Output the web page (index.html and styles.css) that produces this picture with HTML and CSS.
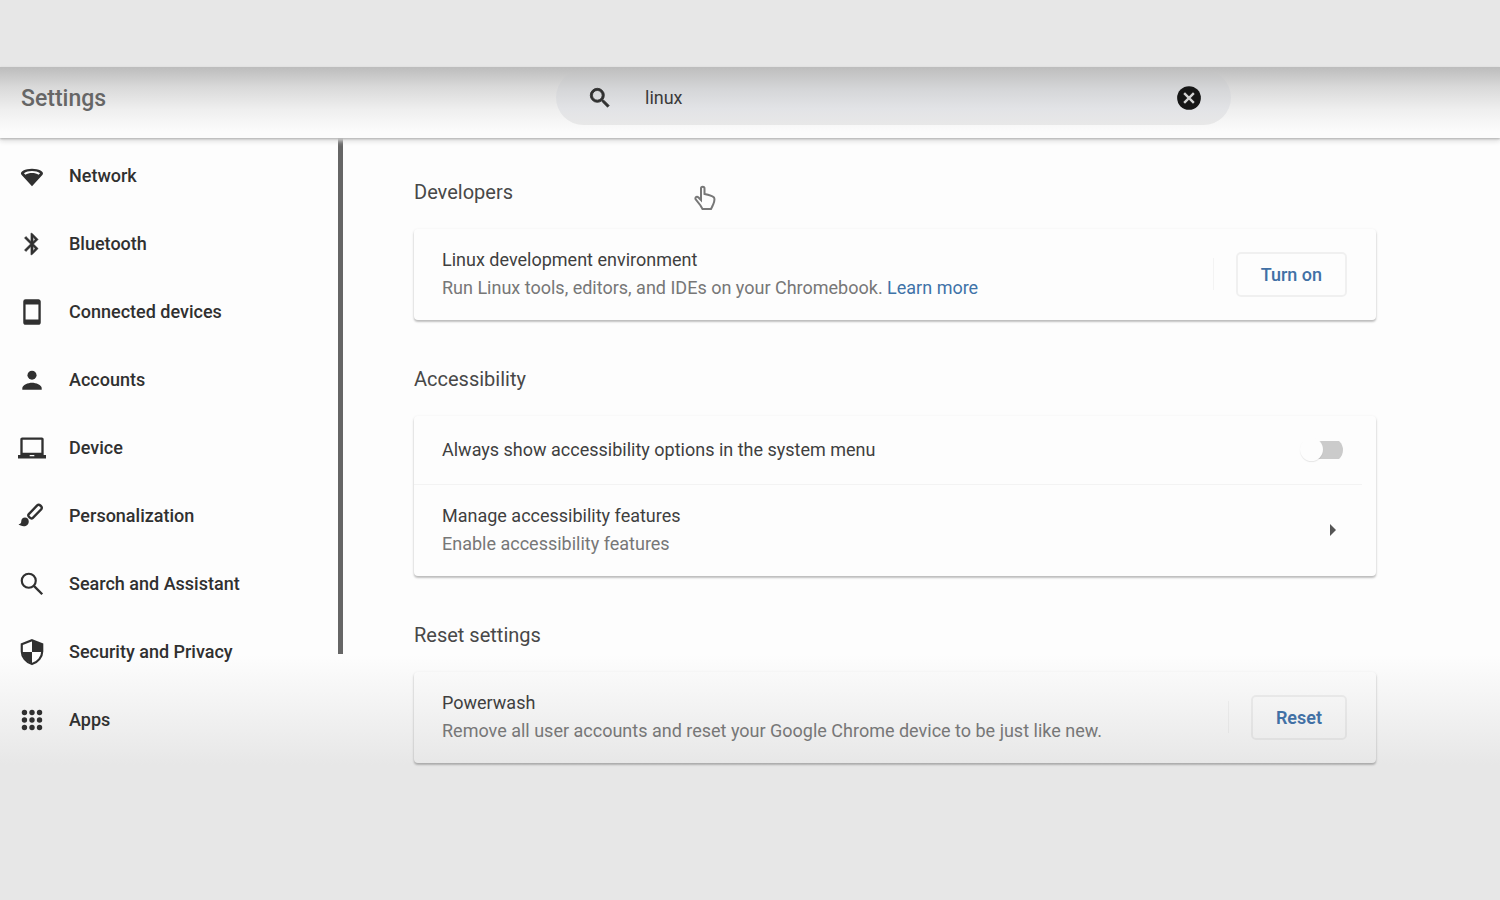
FILE: index.html
```html
<!DOCTYPE html>
<html lang="en">
<head>
<meta charset="utf-8">
<title>Settings</title>
<link rel="stylesheet" href="styles.css">
</head>
<body>
<div class="window">
  <header class="topbar">
    <h1 class="topbar-title">Settings</h1>
    <form class="search" role="search">
      <label class="search-label" for="query" aria-label="Search settings">
        <svg class="icon" viewBox="-1 -1 26 26"><path d="M15.500 14h-.79l-.28-.27A6.470 6.470 0 0 0 16 9.500 6.500 6.500 0 1 0 9.500 16c1.610 0 3.090-.590 4.230-1.570l.27.28v.79l5 4.990L20.490 19l-4.990-5zm-6 0C7.010 14 5 11.990 5 9.500S7.010 5 9.500 5 14 7.010 14 9.500 11.990 14 9.500 14z" stroke="currentColor" stroke-width=".8"/></svg>
      </label>
      <input class="search-input" id="query" type="text" value="linux">
      <button class="search-clear" type="reset" aria-label="Clear search">
        <svg class="icon" viewBox="-1 -1 26 26"><circle cx="12" cy="12" r="11"/><path d="m7.500 7.500 9 9m0-9-9 9" stroke="#d4d4d4" stroke-width="2.200"/></svg>
      </button>
    </form>
  </header>

  <div class="body">
    <nav class="sidebar">
      <a class="nav-item" href="#network">
        <svg class="icon" viewBox="-1 -1 26 26"><path fill-rule="evenodd" d="M12 21.500 2.200 10.800C0 8 6 5.300 12 5.300s12 2.700 9.800 5.500zM4.500 9.400l1.400 1.500C7.400 9.900 9.600 9.300 12 9.300s4.600.6 6.100 1.600l1.400-1.500C17.600 8.200 15 7.400 12 7.400s-5.600.8-7.500 2z"/></svg>Network</a>
      <a class="nav-item" href="#bluetooth">
        <svg class="icon" viewBox="-1 -1 26 26"><path d="M17.710 7.710 12 2h-1v7.590L6.410 5 5 6.410 10.590 12 5 17.590 6.410 19 11 14.410V22h1l5.710-5.710-4.300-4.290 4.300-4.290zM13 5.830l1.880 1.880L13 9.590V5.830zm1.880 10.460L13 18.170v-3.760l1.880 1.880z" stroke="currentColor" stroke-width=".5"/></svg>Bluetooth</a>
      <a class="nav-item" href="#devices">
        <svg class="icon" viewBox="0 0 24 24"><path d="M17.500 1h-11a2 2 0 0 0-2 2v18c0 1.100.9 2 2 2h11c1.100 0 2-.9 2-2V3c0-1.100-.9-2-2-2zm0 17.500h-11v-13h11v13z"/></svg>Connected devices</a>
      <a class="nav-item" href="#accounts">
        <svg class="icon" viewBox="-1 -1 26 26"><circle cx="12" cy="7.500" r="4.200"/><path d="M3 21v-1.500C3 16.500 8.500 14.500 12 14.500s9 2 9 5V21z"/></svg>Accounts</a>
      <a class="nav-item" href="#device">
        <svg class="icon" viewBox="0 0 24 24"><path fill-rule="evenodd" d="M22 18V4.500c0-.8-.7-1.500-1.500-1.500h-17C2.700 3 2 3.700 2 4.500V18H0v3h24v-3h-2zM4 5h16v11H4V5zm6 13h4v1h-4v-1z"/></svg>Device</a>
      <a class="nav-item" href="#personalization">
        <svg class="icon" viewBox="-1 -1 26 26"><path d="m8.800 10.500 8-8.300c1.800-1.700 5.500 1.300 3.800 3.500l-8 8.300c-1.500 1.300-5-1.800-3.800-3.500z" fill="none" stroke="currentColor" stroke-width="2.200"/><path d="M5.500 13.500c2 0 3.500 1.500 3.500 3.500 0 2.500-2 4.500-4.700 4.500-1.800 0-4-.8-4.800-2 1.500 0 2.500-.8 2.500-2.500 0-2 1.500-3.500 3.500-3.500z"/></svg>Personalization</a>
      <a class="nav-item" href="#search">
        <svg class="icon" viewBox="-1 -1 26 26"><circle cx="9" cy="9" r="6.500" fill="none" stroke="currentColor" stroke-width="2"/><path d="m13.500 13.500 8 8" stroke="currentColor" stroke-width="2.200"/></svg>Search and Assistant</a>
      <a class="nav-item" href="#security">
        <svg class="icon" viewBox="-1 -1 26 26"><path d="m12 1 9.500 3.700v6.800c0 5-3.900 10.100-9.500 11.700-5.600-1.600-9.500-6.700-9.500-11.700V4.700z" fill="none" stroke="currentColor" stroke-width="2"/><path d="M12 1 21.500 5v7H12zM3 12h9v10.500C7 21 3.500 17 3 12z"/></svg>Security and Privacy</a>
      <a class="nav-item" href="#apps">
        <svg class="icon" viewBox="-1 -1 26 26"><circle cx="5" cy="5" r="2.500"/><circle cx="12" cy="5" r="2.500"/><circle cx="19" cy="5" r="2.500"/><circle cx="5" cy="12" r="2.500"/><circle cx="12" cy="12" r="2.500"/><circle cx="19" cy="12" r="2.500"/><circle cx="5" cy="19" r="2.500"/><circle cx="12" cy="19" r="2.500"/><circle cx="19" cy="19" r="2.500"/></svg>Apps</a>
    </nav>
    <div class="scroll-thumb"></div>

    <main class="content">
      <section class="section">
        <h2 class="section-title">Developers</h2>
        <div class="card">
          <div class="row">
            <div class="row-text">
              <div class="row-title">Linux development environment</div>
              <div class="row-sub">Run Linux tools, editors, and IDEs on your Chromebook. <a class="link" href="#learn">Learn more</a></div>
            </div>
            <div class="action"><button class="button" type="button">Turn on</button></div>
          </div>
        </div>
      </section>

      <section class="section">
        <h2 class="section-title">Accessibility</h2>
        <div class="card">
          <div class="row row-single">
            <label class="row-title row-text" for="a11y-menu">Always show accessibility options in the system menu</label>
            <input class="toggle" id="a11y-menu" type="checkbox">
          </div>
          <div class="divider"></div>
          <div class="row">
            <div class="row-text">
              <div class="row-title">Manage accessibility features</div>
              <div class="row-sub">Enable accessibility features</div>
            </div>
            <button class="arrow" type="button" aria-label="Manage accessibility features">
              <svg class="arrow-icon" viewBox="0 0 6 12"><path d="M0 0l6 6-6 6z"/></svg>
            </button>
          </div>
        </div>
      </section>

      <section class="section">
        <h2 class="section-title">Reset settings</h2>
        <div class="card">
          <div class="row">
            <div class="row-text">
              <div class="row-title">Powerwash</div>
              <div class="row-sub">Remove all user accounts and reset your Google Chrome device to be just like new.</div>
            </div>
            <div class="action"><button class="button button-strong" type="button">Reset</button></div>
          </div>
        </div>
      </section>

      <svg class="pointer" viewBox="0 0 22 26"><path d="M7 15V3.500C7 1 10.500 1 10.500 3.500V9c4 .8 7.500 1.500 9.500 3.500 1.500 3-.5 6-1.500 8.500L17 24H8.500L6.500 20.500 1.500 14c-.5-2 1.500-3 3-1.500z"/></svg>
    </main>
  </div>
</div>
</body>
</html>
```
FILE: styles.css
```css
* {
  box-sizing: border-box;
}

body {
  margin: 0;
  padding: 67px 0;
  background: #e7e7e7;
  color: #3a3a3a;
  font-family: Roboto, "Liberation Sans", sans-serif;
  font-size: 18px;
}

.window {
  background: linear-gradient(#fdfdfd calc(100% - 110px), #e7e7e7);
}

.icon {
  width: 28px;
  height: 28px;
  flex: none;
  fill: currentColor;
}

.topbar {
  position: relative;
  display: grid;
  grid-template-columns: 535px minmax(0, 1fr);
  align-items: center;
  height: 71px;
  padding: 0 269px 10px 21px;
  background: linear-gradient(#bcbcbc, #d9d9d9 28%, #efefef 60%, #fcfcfc 92%);
  box-shadow: 0 1px 2px #b0b0b0, 0 3px 5px #dcdcdc;
}

.topbar-title {
  margin: 0;
  padding-top: 2px;
  color: #666;
  font-size: 23px;
  font-weight: 500;
}

.search {
  display: flex;
  align-items: center;
  height: 55px;
  padding: 0 28px 0 30px;
  border-radius: 28px;
  background: linear-gradient(#c1c1c1, #d5d6d8 35%, #e2e3e6 70%, #e8e8e8);
}

.search-label,
.search-clear {
  display: flex;
}

.search-clear {
  padding: 0;
  border: 0;
  background: none;
  color: #161616;
}

.search-label {
  color: #303030;
}

.search-input {
  flex: 1;
  min-width: 0;
  padding: 0 0 0 31px;
  border: 0;
  outline: 0;
  background: none;
  color: #3a3a3a;
  font: inherit;
}

.body {
  display: flex;
}

.sidebar {
  flex: none;
  width: 338px;
  padding: 4px 0 11px;
}

.nav-item {
  display: flex;
  align-items: center;
  gap: 23px;
  height: 68px;
  padding: 0 0 1px 18px;
  color: #303030;
  font-weight: 500;
  text-decoration: none;
}

.scroll-thumb {
  flex: none;
  width: 5px;
  height: 516px;
  background: #666;
}

.content {
  position: relative;
  flex: 1;
  min-width: 0;
  padding: 42px 124px 0 71px;
}

.section {
  margin-bottom: 47px;
}

.section:last-of-type {
  margin-bottom: 0;
}

.section-title {
  margin: 0 0 25px;
  color: #484848;
  font-size: 20px;
  font-weight: 400;
  line-height: 24px;
}

.card {
  border-radius: 4px;
  box-shadow: 0 2px 2px #00000030, 0 1px 3px #00000020;
}

.row {
  display: flex;
  align-items: center;
  min-height: 91px;
  padding: 0 29px 1px 28px;
}

.row-single {
  min-height: 68px;
}

.row-text {
  flex: 1;
}

.row-title {
  color: #3f3f3f;
  line-height: 28px;
}

.row-sub {
  color: #777;
  line-height: 28px;
}

.link {
  color: #3f73a8;
  text-decoration: none;
}

.divider {
  height: 1px;
  margin-right: 14px;
  background: #f3f3f3;
}

.action {
  display: flex;
  align-items: center;
}

.action::before {
  content: "";
  width: 1px;
  height: 32px;
  margin-right: 22px;
  background: #0000000a;
}

.button {
  height: 45px;
  padding: 0 23px;
  border: 2px solid #0000000d;
  border-radius: 5px;
  background: none;
  color: #4170a5;
  font: inherit;
  font-weight: 500;
}

.button-strong {
  font-weight: 600;
}

.toggle {
  appearance: none;
  display: flex;
  align-items: center;
  width: 43px;
  height: 24px;
  margin: 0 4px 0 0;
  background: linear-gradient(#cbcbcb, #cbcbcb) right center / 26px 18px no-repeat;
  border-radius: 12px;
}

.toggle::before {
  content: "";
  width: 23px;
  height: 23px;
  border-radius: 50%;
  background: #fdfdfd;
  box-shadow: 0 1px 1px #00000018;
}

.arrow {
  display: flex;
  margin-right: 11px;
  padding: 0;
  border: 0;
  background: none;
}

.arrow-icon {
  width: 6px;
  height: 12px;
  fill: #555;
}

.pointer {
  position: absolute;
  top: 47px;
  left: 351px;
  width: 22px;
  height: 26px;
  fill: #fdfdfd;
  stroke: #777;
  stroke-width: 2;
}
```
